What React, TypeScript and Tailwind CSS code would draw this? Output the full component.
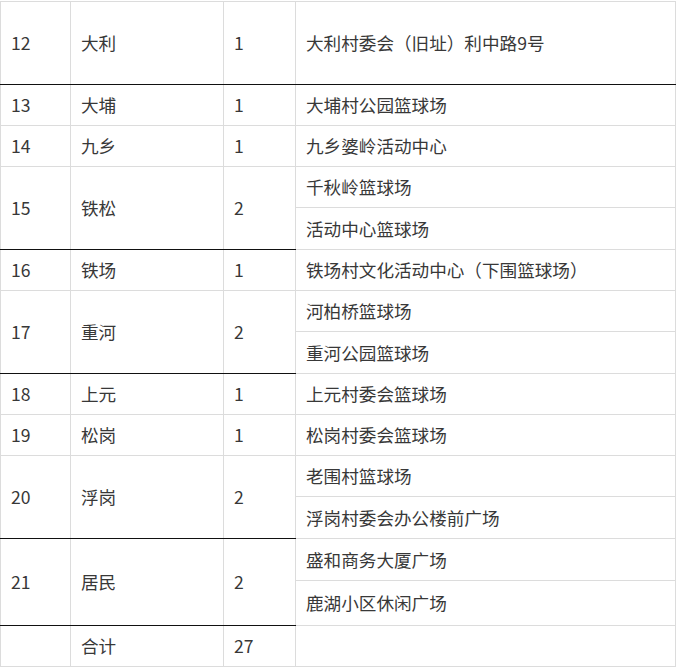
import React from "react";

type Row = {
  no?: string;
  town?: string;
  count?: string;
  span?: number;
  place: string;
  h: number;
  dark?: boolean; // black line under the first three columns
  darkPlace?: boolean; // black line under the place column too
};

const rows: Row[] = [
  { no: "12", town: "大利", count: "1", span: 1, place: "大利村委会（旧址）利中路9号", h: 83, dark: true, darkPlace: true },
  { no: "13", town: "大埔", count: "1", span: 1, place: "大埔村公园篮球场", h: 41 },
  { no: "14", town: "九乡", count: "1", span: 1, place: "九乡婆岭活动中心", h: 41 },
  { no: "15", town: "铁松", count: "2", span: 2, place: "千秋岭篮球场", h: 41, dark: true },
  { place: "活动中心篮球场", h: 42 },
  { no: "16", town: "铁场", count: "1", span: 1, place: "铁场村文化活动中心（下围篮球场）", h: 41 },
  { no: "17", town: "重河", count: "2", span: 2, place: "河柏桥篮球场", h: 41, dark: true },
  { place: "重河公园篮球场", h: 42 },
  { no: "18", town: "上元", count: "1", span: 1, place: "上元村委会篮球场", h: 41 },
  { no: "19", town: "松岗", count: "1", span: 1, place: "松岗村委会篮球场", h: 41 },
  { no: "20", town: "浮岗", count: "2", span: 2, place: "老围村篮球场", h: 41, dark: true },
  { place: "浮岗村委会办公楼前广场", h: 42 },
  { no: "21", town: "居民", count: "2", span: 2, place: "盛和商务大厦广场", h: 42, dark: true },
  { place: "鹿湖小区休闲广场", h: 45 },
  { no: "", town: "合计", count: "27", span: 1, place: "", h: 41 },
];

const cell = "border border-[#dcdcdc] pl-[10px] align-middle";

export default function App() {
  return (
    <div
      className="bg-white w-[680px] h-[671px] pt-px text-[#383838] text-[17.6px] leading-none"
      style={{ fontFamily: '"Noto Sans CJK SC", "Noto Sans", sans-serif' }}
    >
      <table className="border-collapse table-fixed w-[675px]">
        <colgroup>
          <col className="w-[70px]" />
          <col className="w-[153px]" />
          <col className="w-[72px]" />
          <col className="w-[380px]" />
        </colgroup>
        <tbody>
          {rows.map((r, i) => (
            <tr key={i} style={{ height: r.h }}>
              {r.no !== undefined && (
                <>
                  <td rowSpan={r.span} className={`${cell} ${r.dark ? "border-b-[#111111]" : ""}`}>
                    {r.no}
                  </td>
                  <td rowSpan={r.span} className={`${cell} ${r.dark ? "border-b-[#111111]" : ""}`}>
                    {r.town}
                  </td>
                  <td rowSpan={r.span} className={`${cell} ${r.dark ? "border-b-[#111111]" : ""}`}>
                    {r.count}
                  </td>
                </>
              )}
              <td className={`${cell} ${r.darkPlace ? "border-b-[#111111]" : ""}`}>{r.place}</td>
            </tr>
          ))}
        </tbody>
      </table>
    </div>
  );
}
